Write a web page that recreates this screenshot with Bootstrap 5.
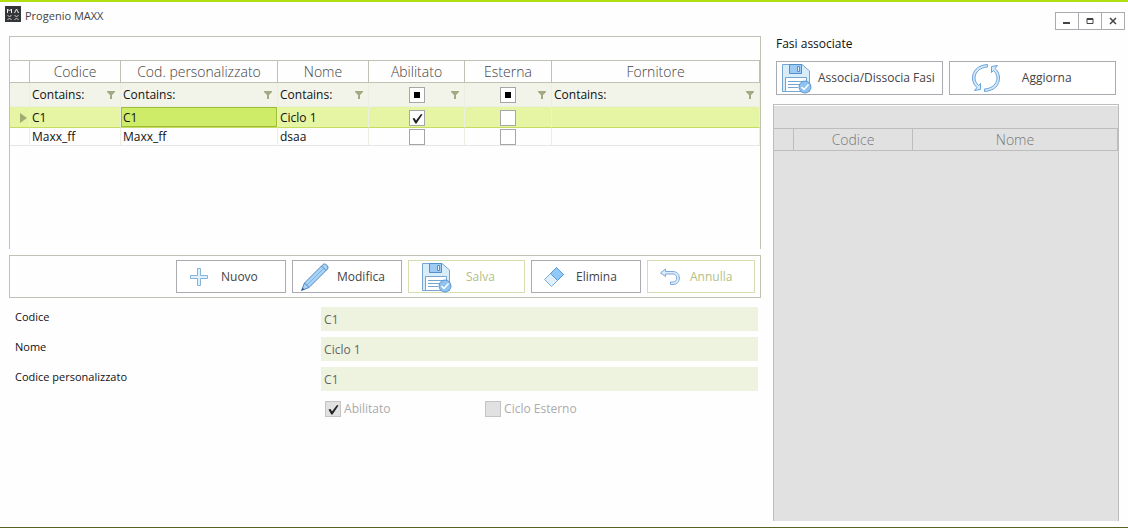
<!DOCTYPE html>
<html lang="it">
<head>
<meta charset="utf-8">
<meta name="viewport" content="width=device-width, initial-scale=1">
<title>Progenio MAXX</title>
<link href="https://cdn.jsdelivr.net/npm/bootstrap@5.3.0/dist/css/bootstrap.min.css" rel="stylesheet">
<style>
  :root { --line: #bfc1b2; --grey-line: #a9abb0; --soft: #ecefe0; }
  body {
    font: 12px/16px "Open Sans", "Noto Sans", sans-serif; color: #111; background: #fefefe;
    border-top: 2px solid #b0df10; border-bottom: 1px solid #5b6024;
  }
  .title-bar { height: 34px; padding: 4px 3px 0 5px; }
  .title-bar h1 { font-size: 11px; line-height: 16px; color: #444; }
  .win-btn { width: 24px; height: 18px; padding: 0; margin-left: -1px; border: 1px solid var(--grey-line); background: #fff; }
  .win-controls { margin-top: 6px; }
  .workspace { display: grid; grid-template-columns: 752fr 346fr; column-gap: 12px; margin: 0 9px 6px; }

  /* data grids */
  .grid-panel { border: 1px solid var(--line); border-bottom: 0; }
  .cycles { min-height: 213px; }
  .group-bar { height: 24px; border-bottom: 1px solid var(--line); }
  .data-grid { width: 100%; table-layout: fixed; border-collapse: separate; border-spacing: 0; }
  .data-grid th { height: 22px; padding: 1px 0 0; font-size: 14px; line-height: 20px; font-weight: 300; color: #444; text-align: center; border-right: 1px solid var(--line); border-bottom: 1px solid var(--line); }
  .data-grid td { height: 18px; padding: 0 2px; line-height: 16px; border-right: 1px solid var(--soft); border-bottom: 1px solid #e6e6e6; white-space: nowrap; }
  .filter-row td { height: 24px; background: #f2f4ea; border-bottom-color: var(--soft); }
  .data-grid .current-row td { height: 21px; padding-top: 1px; background: #e5f5a4; border-bottom-color: #c5dc60; }
  .data-grid .current-row td.current-cell { background: #cfec68; box-shadow: inset 0 0 0 1px #a0bd38; }
  .tri-filter { display: grid; grid-template-columns: 1fr auto 1fr; align-items: center; }
  .funnel { padding: 0; border: 0; background: none; line-height: 0; margin-right: 3px; }
  .tick { appearance: none; display: block; flex: none; width: 16px; height: 16px; margin: 0; border: 1px solid #a6a6a6; background: #fff center/14px 14px no-repeat; }
  td > .tick { margin: 0 auto; }
  .tick:checked { background-image: url("data:image/svg+xml,%3Csvg xmlns='http://www.w3.org/2000/svg' viewBox='0 0 14 14'%3E%3Cpath d='M2.5 7.5L4.5 7L6 9.5L11 3L12.5 3.5L6.5 12.5L5.3 12.5Z' fill='%23222'/%3E%3C/svg%3E"); }
  .tick:indeterminate { background-image: linear-gradient(#000, #000); background-size: 6px 6px; }
  .tick:disabled { background-color: #e1e1e1; border-color: #c4c4c4; }

  /* buttons */
  .tool-bar { margin-top: 6px; padding: 4px 5px 4px 0; gap: 6px; border: 1px solid var(--line); }
  .tool-btn { display: flex; align-items: center; gap: 6px; height: 33px; width: 110px; padding: 0 0 0 6px; border: 1px solid var(--grey-line); background: #fff; color: #444; text-align: left; white-space: nowrap; }
  .tool-btn svg { flex: none; width: 32px; height: 32px; }
  .tool-btn:disabled { border-color: #d3dfb0; color: #b3c183; }
  .save-btn { width: 117px; padding-left: 12px; gap: 13px; }
  .undo-btn { width: 108px; gap: 4px; }
  .side-btn { flex: 1 1 50%; height: 34px; padding-left: 4px; gap: 5px; }
  .refresh-btn { padding-left: 20px; gap: 20px; }

  /* detail form */
  .detail { padding: 9px 3px 0 0; }
  .detail .line { min-height: 24px; margin-bottom: 6px; }
  .detail .line label { padding: 2px 0 0 6px; font-size: 11px; }
  .detail input[type=text] { display: block; height: 24px; width: 100%; padding: 0 3px; border: 0; background: #eef3df; color: #666; }
  .options { padding: 4px 0 0 4px; color: #ababab; }
  .options label { width: 160px; gap: 3px; }

  .side-title { font-size: 12px; line-height: 16px; padding-left: 3px; height: 25px; }
  .side-actions { padding: 0 3px; gap: 6px; }
  .phases { --line: #bdbdbd; margin-top: 9px; padding-top: 1px; background: #e1e1e1 content-box; }
  .phases .group-bar { height: 23px; }
  .phases .data-grid th { color: #777; }
</style>
</head>
<body class="min-vh-100 d-flex flex-column">
<svg class="d-none" aria-hidden="true">
  <symbol id="i-funnel" viewBox="0 0 8 8"><path d="M0 0H8V1L5 4V8H3V4L0 1Z" fill="#a3aa83"/></symbol>
  <symbol id="i-save" viewBox="0 0 32 32">
    <path d="M1.500 2.500H21L28.500 9V29.500H1.500Z" fill="#d9ecfa" stroke="#76a5cf"/>
    <path d="M8.500 2.500H20.500V11.500H8.500Z" fill="#9dcbf3" stroke="#558fc8"/><path d="M16.500 4.500H18.500V9.500H16.500Z" fill="#e6f3fd" stroke="#558fc8"/>
    <path d="M4.500 15.500H25.500V29.500H4.500Z" fill="#fff" stroke="#76a5cf"/><path d="M7 19.500H23M7 22.500H19M7 25.500H17" stroke="#76a5cf"/>
    <circle cx="24" cy="25" r="6" fill="#8fc2f0" stroke="#5b96d0"/><path d="M20.500 25L23 27.500L27.500 22.500" fill="none" stroke="#fff" stroke-width="1.500"/>
  </symbol>
</svg>

<header class="title-bar d-flex justify-content-between align-items-start">
  <div class="d-flex align-items-start">
    <svg width="16" height="16" viewBox="0 0 16 16" aria-hidden="true"><path fill="#333538" d="M0 0H16V16H0Z"/><path d="M2.500 7V3L4.500 5L6.500 3V7M9.500 7L11.500 3L13.500 7" fill="none" stroke="#eee"/><path d="M2.500 9L4.500 11L6.500 9M2.500 14L4.500 12L6.500 14M9.500 9L11.500 11L13.500 9M9.500 14L11.500 12L13.500 14" fill="none" stroke="#ccc"/></svg>
    <h1 class="m-0 fw-normal ps-1 pt-1 lh-1">Progenio MAXX</h1>
  </div>
  <div class="win-controls d-flex">
    <button class="win-btn" aria-label="Riduci"><svg class="d-block mx-auto" width="10" height="10"><path d="M1 7H8" stroke="#444" stroke-width="2"/></svg></button>
    <button class="win-btn" aria-label="Ingrandisci"><svg class="d-block mx-auto" width="10" height="10"><path d="M2 2.500H8V7.500H2ZM2 3.500H8" fill="none" stroke="#444"/></svg></button>
    <button class="win-btn" aria-label="Chiudi"><svg class="d-block mx-auto" width="10" height="10"><path d="M2 2L8 8M8 2L2 8" stroke="#444" stroke-width="1.500"/></svg></button>
  </div>
</header>

<main class="workspace flex-grow-1">
  <section class="d-flex flex-column">
    <div class="grid-panel cycles">
      <div class="group-bar"></div>
      <table class="data-grid">
        <colgroup><col style="width:20px"><col style="width:91px"><col style="width:157px"><col style="width:91px"><col style="width:96px"><col style="width:87px"><col></colgroup>
        <thead><tr><th></th><th>Codice</th><th>Cod. personalizzato</th><th>Nome</th><th>Abilitato</th><th>Esterna</th><th>Fornitore</th></tr></thead>
        <tbody>
          <tr class="filter-row">
            <td></td>
            <td><div class="d-flex justify-content-between align-items-center"><span>Contains:</span><button class="funnel" aria-label="Filtra Codice"><svg width="8" height="8"><use href="#i-funnel"/></svg></button></div></td>
            <td><div class="d-flex justify-content-between align-items-center"><span>Contains:</span><button class="funnel" aria-label="Filtra Cod. personalizzato"><svg width="8" height="8"><use href="#i-funnel"/></svg></button></div></td>
            <td><div class="d-flex justify-content-between align-items-center"><span>Contains:</span><button class="funnel" aria-label="Filtra Nome"><svg width="8" height="8"><use href="#i-funnel"/></svg></button></div></td>
            <td><div class="tri-filter"><span></span><input class="tick tri" type="checkbox" aria-label="Filtro Abilitato"><button class="funnel ms-auto" aria-label="Filtra Abilitato"><svg width="8" height="8"><use href="#i-funnel"/></svg></button></div></td>
            <td><div class="tri-filter"><span></span><input class="tick tri" type="checkbox" aria-label="Filtro Esterna"><button class="funnel ms-auto" aria-label="Filtra Esterna"><svg width="8" height="8"><use href="#i-funnel"/></svg></button></div></td>
            <td><div class="d-flex justify-content-between align-items-center"><span>Contains:</span><button class="funnel" aria-label="Filtra Fornitore"><svg width="8" height="8"><use href="#i-funnel"/></svg></button></div></td>
          </tr>
          <tr class="current-row">
            <td><svg class="d-block ms-auto" width="7" height="10" aria-hidden="true"><path d="M0 0L7 5L0 10Z" fill="#a3aa72"/></svg></td>
            <td>C1</td><td class="current-cell">C1</td><td>Ciclo 1</td>
            <td><input class="tick" type="checkbox" checked aria-label="C1 abilitato"></td>
            <td><input class="tick" type="checkbox" aria-label="C1 esterna"></td><td></td>
          </tr>
          <tr>
            <td></td><td>Maxx_ff</td><td>Maxx_ff</td><td>dsaa</td>
            <td><input class="tick" type="checkbox" aria-label="Maxx_ff abilitato"></td>
            <td><input class="tick" type="checkbox" aria-label="Maxx_ff esterna"></td><td></td>
          </tr>
        </tbody>
      </table>
    </div>

    <div class="tool-bar d-flex justify-content-end">
      <button class="tool-btn"><svg viewBox="0 0 32 32"><path d="M14.500 7.500H17.500V14.500H24.500V17.500H17.500V24.500H14.500V17.500H7.500V14.500H14.500Z" fill="#e0f1fc" stroke="#83b4dc"/></svg>Nuovo</button>
      <button class="tool-btn"><svg viewBox="0 0 32 32"><path d="M2.500 29.500L5.500 22L24 3.500C26 1.500 30.500 5.500 28.500 8L10 26.500Z" fill="#a9d3f6" stroke="#4f87be"/><path d="M5.500 22L10 26.500M22.500 5L27 9.500" fill="none" stroke="#4f87be"/><path d="M8 24L24.500 7.500" fill="none" stroke="#7fb2e2"/><path d="M2.500 29.500L3.500 26.500L5.500 28.500Z" fill="#345d88"/></svg>Modifica</button>
      <button class="tool-btn save-btn" disabled><svg><use href="#i-save"/></svg>Salva</button>
      <button class="tool-btn"><svg viewBox="0 0 32 32"><path d="M6.500 18.500L18.500 6.500L25.500 13.500L13.500 25.500Z" fill="#dff0fc" stroke="#78acd9"/><path d="M12.500 12.500L18.500 6.500L25.500 13.500L19.500 19.500Z" fill="#90c8f7" stroke="#559bd8"/></svg>Elimina</button>
      <button class="tool-btn undo-btn" disabled><svg viewBox="0 0 32 32"><path d="M6.500 12L11.500 8V10.500H19C27.500 10.500 27.500 23.500 19 23.500H16.500V21H19C24 21 24 13 19 13H11.500V15.500Z" fill="#dcecfb" stroke="#7ba9df"/></svg>Annulla</button>
    </div>

    <form class="detail">
      <div class="row g-0 line"><label class="col-5" for="codice">Codice</label><div class="col-7"><input id="codice" type="text" value="C1" disabled></div></div>
      <div class="row g-0 line"><label class="col-5" for="nome">Nome</label><div class="col-7"><input id="nome" type="text" value="Ciclo 1" disabled></div></div>
      <div class="row g-0 line"><label class="col-5" for="personalizzato">Codice personalizzato</label><div class="col-7"><input id="personalizzato" type="text" value="C1" disabled></div></div>
      <div class="row g-0"><div class="col-7 offset-5 options d-flex">
        <label class="d-flex align-items-center"><input class="tick" type="checkbox" checked disabled>Abilitato</label>
        <label class="d-flex align-items-center"><input class="tick" type="checkbox" disabled>Ciclo Esterno</label>
      </div></div>
    </form>
  </section>

  <section class="d-flex flex-column">
    <h2 class="side-title m-0 fw-normal">Fasi associate</h2>
    <div class="side-actions d-flex">
      <button class="tool-btn side-btn"><svg><use href="#i-save"/></svg>Associa/Dissocia Fasi</button>
      <button class="tool-btn side-btn refresh-btn"><svg viewBox="0 0 32 32"><g id="arc"><path d="M17.500 2.500C8 3 2 9 2.500 17C3 21 4.500 23.500 7 25.500L4.500 28.500L10.500 27.500V21.500L8.500 23.500C6 21 5 18.500 5 16C5 10 10 5.500 17.500 5Z" fill="#d5eafb" stroke="#6ba3da"/></g><use href="#arc" transform="rotate(180 16 16)"/></svg>Aggiorna</button>
    </div>
    <div class="grid-panel phases flex-grow-1">
      <div class="group-bar"></div>
      <table class="data-grid">
        <colgroup><col style="width:20px"><col style="width:119px"><col></colgroup>
        <thead><tr><th></th><th>Codice</th><th>Nome</th></tr></thead>
      </table>
    </div>
  </section>
</main>
<script src="https://cdn.jsdelivr.net/npm/bootstrap@5.3.0/dist/js/bootstrap.bundle.min.js"></script>
<script>
  // filter boxes start in the "any value" state
  document.querySelectorAll('.tri').forEach(box => { box.indeterminate = true; });
</script>
</body>
</html>
